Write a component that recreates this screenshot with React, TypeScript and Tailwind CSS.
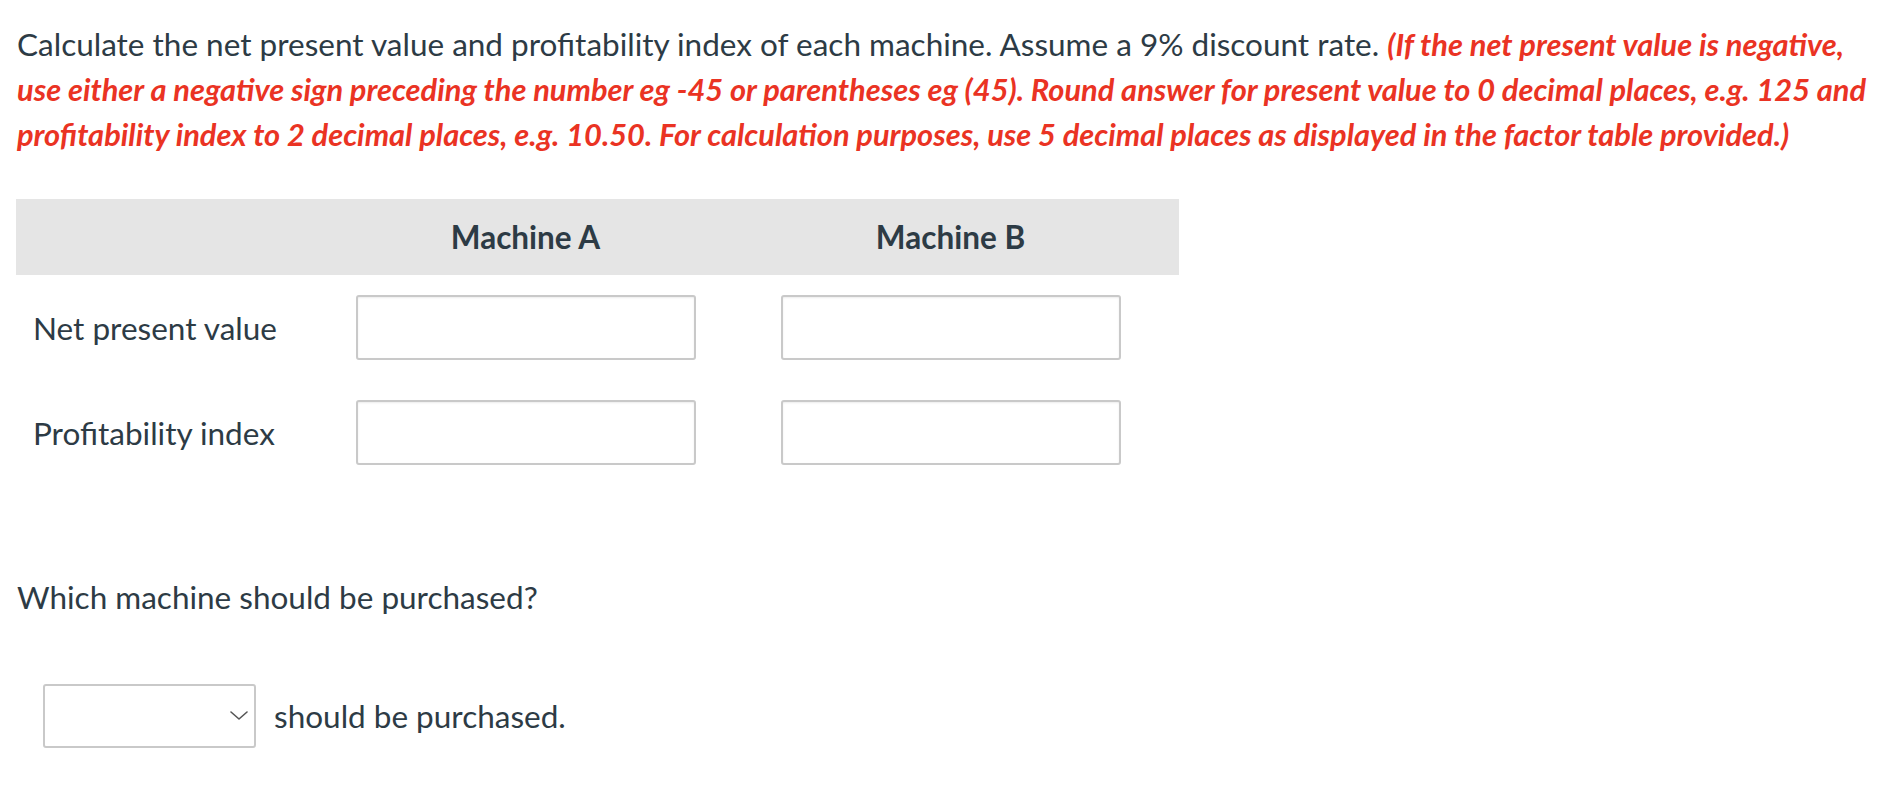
import React from 'react';

const rows = ['Net present value', 'Profitability index'];

const AnswerBox = () => (
    <input
        type="text"
        className="w-[340px] h-[65px] border-2 border-[#c9c9c9] rounded-[3px] bg-white shadow-[inset_0_1px_2px_rgba(0,0,0,0.08)] outline-none px-2 text-[29px]"
    />
);

const App = () => {
    return (
        <div className="min-h-screen bg-white text-[#2d3b45] font-['Lato','Liberation_Sans',sans-serif] text-[31.5px] leading-[44px] pl-[17px] pr-[8px] pt-[22px]">
            <p>
                Calculate the net present value and profitability index of
                each machine. Assume a 9% discount rate.{' '}
                <span className="text-[#ea3323] text-[30.8px] font-bold italic">
                    (If the net present value is negative, use either a
                    negative sign preceding the number eg -45 or parentheses eg
                    (45). Round answer for present value to 0 decimal places,
                    e.g. 125 and profitability index to 2 decimal places, e.g.
                    10.50. For calculation purposes, use 5 decimal places as
                    displayed in the factor table provided.)
                </span>
            </p>

            <div className="mt-[42px] w-[1163px] -ml-px">
                <div className="grid grid-cols-[297px_425px_425px] h-[76px] items-center bg-[#e5e5e5] font-bold">
                    <div />
                    <div className="text-center">Machine A</div>
                    <div className="text-center">Machine B</div>
                </div>
                {rows.map((label) => (
                    <div
                        key={label}
                        className="grid grid-cols-[297px_425px_425px] h-[105px] items-center"
                    >
                        <div className="pl-[17px]">{label}</div>
                        <div className="flex justify-center">
                            <AnswerBox />
                        </div>
                        <div className="flex justify-center">
                            <AnswerBox />
                        </div>
                    </div>
                ))}
            </div>

            <p className="mt-[90px]">Which machine should be purchased?</p>

            <div className="mt-[65px] ml-[26px] flex items-center gap-[18px]">
                <div className="relative w-[213px] h-[64px] border-2 border-[#c9c9c9] rounded-[3px] bg-white">
                    <svg
                        className="absolute right-[6px] top-[25px]"
                        width="18"
                        height="9"
                        viewBox="0 0 18 9"
                        fill="none"
                    >
                        <path
                            d="M1 1l8 7 8-7"
                            stroke="#555"
                            strokeWidth="1.6"
                            strokeLinecap="round"
                            strokeLinejoin="round"
                        />
                    </svg>
                </div>
                <span>should be purchased.</span>
            </div>
        </div>
    );
};

export default App;
